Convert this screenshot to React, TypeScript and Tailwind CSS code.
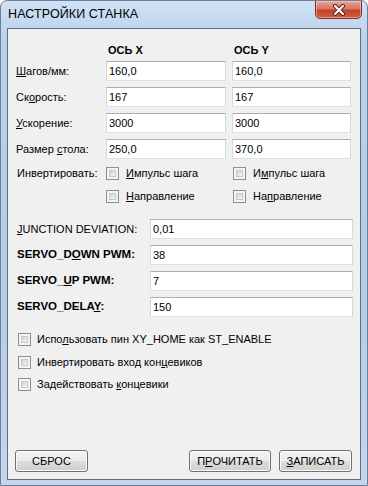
import React from 'react';

const sans = "font-['Liberation_Sans',Arial,sans-serif]";

function Field({ value, className }: { value: string; className: string }) {
  return (
    <div
      className={`${className} h-[20px] bg-white border border-[#abadb3] border-l-[#d5d8de] border-r-[#d5d8de] border-b-[#dfe3e8] pl-[2px] flex items-center text-[11px] text-black`}
    >
      {value}
    </div>
  );
}

function Check() {
  return (
    <span className="w-[13px] h-[13px] shrink-0 border border-[#8e8f8f] bg-[#f4f4f4] p-[2px] flex">
      <span className="flex-1 border border-[#c7c9cc] bg-[linear-gradient(135deg,#cdd0d4,#f7f7f7)]" />
    </span>
  );
}

function Btn({ children, className }: { children: React.ReactNode; className: string }) {
  return (
    <button
      type="button"
      className={`${className} h-[22px] rounded-[3px] border border-[#707070] bg-[linear-gradient(#f2f2f2_0%,#ebebeb_50%,#dddddd_50%,#cfcfcf_100%)] shadow-[inset_0_0_0_1px_#fbfbfb] text-[11px] text-black flex items-center justify-center`}
    >
      {children}
    </button>
  );
}

const axisRows = [
  { label: <><u>Ш</u>агов/мм:</>, x: '160,0', y: '160,0' },
  { label: <>Ск<u>о</u>рость:</>, x: '167', y: '167' },
  { label: <><u>У</u>скорение:</>, x: '3000', y: '3000' },
  { label: <>Размер <u>с</u>тола:</>, x: '250,0', y: '370,0' },
];

const servoRows = [
  { label: <><u>J</u>UNCTION DEVIATION:</>, value: '0,01', bold: false },
  { label: <>SERVO_D<u>O</u>WN PWM:</>, value: '38', bold: true },
  { label: <>SERVO_<u>U</u>P PWM:</>, value: '7', bold: true },
  { label: <>SERVO_DELA<u>Y</u>:</>, value: '150', bold: true },
];

export default function App() {
  return (
    <div className={`${sans} w-[368px] h-[486px] flex flex-col rounded-t-[7px] border border-[#6d7f95] bg-[linear-gradient(180deg,#d0e1f4_0%,#bad1ec_8%,#b4cce8_60%,#c3d6ed_100%)] overflow-hidden`}>
      {/* title bar */}
      <div className="h-[27px] flex items-start justify-between shrink-0">
        <div className="pl-[7px] pt-[7px] text-[12.5px] text-black leading-none tracking-[0.1px]">
          НАСТРОЙКИ СТАНКА
        </div>
        <div className="mr-[5px] w-[47px] h-[19px] -mt-px rounded-b-[5px] border border-[#7e2e22] bg-[linear-gradient(180deg,#e9a898_0%,#d8755f_45%,#c4412a_55%,#d15c3f_100%)] shadow-[inset_0_0_0_1px_rgba(255,220,210,0.5)] flex items-center justify-center">
          <svg width="14" height="12" viewBox="0 0 14 12">
            <path d="M3 2 L11 10 M11 2 L3 10" stroke="#5a1c12" strokeWidth="4" strokeLinecap="round" />
            <path d="M3 2 L11 10 M11 2 L3 10" stroke="#ffffff" strokeWidth="2.2" strokeLinecap="round" />
          </svg>
        </div>
      </div>

      {/* client area */}
      <div className="mx-[6px] mb-[5px] flex-1 border border-[#5f7085] bg-[#f0f0f0] flex flex-col text-[11px] text-black">
        <div className="pt-[13px] pl-[8px]">
          <div className="grid grid-cols-[84px_120px_119px] gap-x-[6px]">
            <div className="h-[16px]" />
            <div className="h-[16px] flex items-center pl-[2px] font-bold">ОСЬ X</div>
            <div className="h-[16px] flex items-center pl-[2px] font-bold">ОСЬ Y</div>
          </div>
          <div className="mt-[3px] flex flex-col gap-[6px]">
            {axisRows.map((r, i) => (
              <div key={i} className="grid grid-cols-[84px_120px_119px] gap-x-[6px] items-center">
                <div>{r.label}</div>
                <Field value={r.x} className="w-[120px]" />
                <Field value={r.y} className="w-[119px]" />
              </div>
            ))}
          </div>
          <div className="mt-[3px] grid grid-cols-[84px_120px_119px] gap-x-[6px]">
            <div className="h-[23px] flex items-center pl-px">Инвертировать:</div>
            <div className="h-[23px] flex items-center gap-[7px]">
              <Check />
              <span><u>И</u>мпульс шага</span>
            </div>
            <div className="h-[23px] flex items-center gap-[7px] pl-px">
              <Check />
              <span>И<u>м</u>пульс шага</span>
            </div>
            <div className="h-[23px]" />
            <div className="h-[23px] flex items-center gap-[7px]">
              <Check />
              <span><u>Н</u>аправление</span>
            </div>
            <div className="h-[23px] flex items-center gap-[7px] pl-px">
              <Check />
              <span>На<u>п</u>равление</span>
            </div>
          </div>
          <div className="mt-[11px] flex flex-col gap-[6px]">
            {servoRows.map((r, i) => (
              <div key={i} className="flex items-center">
                <div className={r.bold ? 'w-[134px] pl-px font-bold text-[11.5px]' : 'w-[134px] pl-px'}>{r.label}</div>
                <Field value={r.value} className="w-[203px]" />
              </div>
            ))}
          </div>
          <div className="mt-[11px] pl-[2px] flex flex-col">
            <div className="h-[23px] flex items-center gap-[6px]">
              <Check />
              <span>Испо<u>л</u>ьзовать пин XY_HOME как ST_ENABLE</span>
            </div>
            <div className="h-[22px] flex items-center gap-[6px]">
              <Check />
              <span>Инвертировать вход кон<u>ц</u>евиков</span>
            </div>
            <div className="h-[22px] flex items-center gap-[6px]">
              <Check />
              <span>Задействовать <u>к</u>онцевики</span>
            </div>
          </div>
        </div>
        <div className="mt-auto mb-[7px] flex items-center pl-[7px] pr-[8px]">
          <Btn className="w-[73px]">СБРОС</Btn>
          <div className="flex-1" />
          <Btn className="w-[82px]">П<u>Р</u>ОЧИТАТЬ</Btn>
          <Btn className="w-[73px] ml-[8px]"><u>З</u>АПИСАТЬ</Btn>
        </div>
      </div>
    </div>
  );
}
